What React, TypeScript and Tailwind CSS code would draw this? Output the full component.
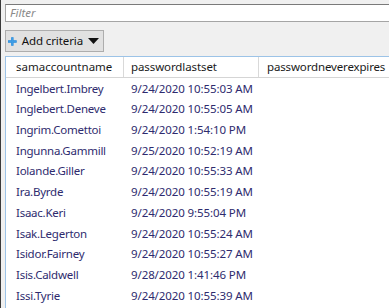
import React from "react";

const rows: [string, string][] = [
  ["Ingelbert.Imbrey", "9/24/2020 10:55:03 AM"],
  ["Inglebert.Deneve", "9/24/2020 10:55:05 AM"],
  ["Ingrim.Comettoi", "9/24/2020 1:54:10 PM"],
  ["Ingunna.Gammill", "9/25/2020 10:52:19 AM"],
  ["Iolande.Giller", "9/24/2020 10:55:33 AM"],
  ["Ira.Byrde", "9/24/2020 10:55:19 AM"],
  ["Isaac.Keri", "9/24/2020 9:55:04 PM"],
  ["Isak.Legerton", "9/24/2020 10:55:24 AM"],
  ["Isidor.Fairney", "9/24/2020 10:55:27 AM"],
  ["Isis.Caldwell", "9/28/2020 1:41:46 PM"],
  ["Issi.Tyrie", "9/24/2020 10:55:39 AM"],
];

const PlusIcon = () => (
  <svg width="11" height="11" viewBox="0 0 11 11">
    <path d="M4 0h3v4h4v3H7v4H4V7H0V4h4z" fill="#2a8ad8" />
    <path d="M4.5 0.5h2v4h4v2h-4v4h-2v-4h-4v-2h4z" fill="#3d9de6" />
  </svg>
);

export default function App() {
  return (
    <div
      className="w-[389px] h-[308px] overflow-hidden bg-[#f0f0f0] border-l border-[#3a3a3a] flex flex-col text-[11.5px]"
      style={{ fontFamily: '"Noto Sans", "Open Sans", sans-serif' }}
    >
      <div className="mt-[4px] ml-[4px] h-[18px] bg-white border border-r-0 border-[#a5a5a5] border-t-[#7a7a7a] flex items-center pl-[4px]">
        <span className="italic text-[#8a8a8a] leading-none">Filter</span>
      </div>

      <div className="mt-[8px] ml-[4px]">
        <button className="h-[22px] w-[99px] bg-[#e1e1e1] border border-[#adadad] flex items-center pl-[2px] gap-[5px] text-[#111] whitespace-nowrap">
          <PlusIcon />
          <span className="leading-none tracking-[-0.1px]">Add criteria</span>
          <svg width="11" height="6" viewBox="0 0 11 6" className="ml-auto mr-[4px] shrink-0">
            <path d="M0 0h11L5.5 6z" fill="#111" />
          </svg>
        </button>
      </div>

      <div className="mt-[4px] ml-[4px] flex-1 bg-white border-l border-t border-[#9cc3e7]">
        <div className="grid grid-cols-[118px_135px_1fr] h-[21px] border-b border-[#d5d5d5] text-[#1a1a1a] whitespace-nowrap">
          <div className="pl-[10px] border-r border-[#d9d9d9] flex items-center">samaccountname</div>
          <div className="pl-[7px] border-r border-[#d9d9d9] flex items-center tracking-[-0.1px]">passwordlastset</div>
          <div className="pl-[8px] flex items-center tracking-[-0.15px]">passwordneverexpires</div>
        </div>
        {rows.map(([name, date]) => (
          <div key={name} className="grid grid-cols-[118px_135px_1fr] h-[20.7px] text-[#2e2b6e] whitespace-nowrap">
            <div className="pl-[10px] flex items-center tracking-[-0.25px]">{name}</div>
            <div className="pl-[7px] flex items-center tracking-[-0.1px]">{date}</div>
            <div />
          </div>
        ))}
      </div>
    </div>
  );
}
